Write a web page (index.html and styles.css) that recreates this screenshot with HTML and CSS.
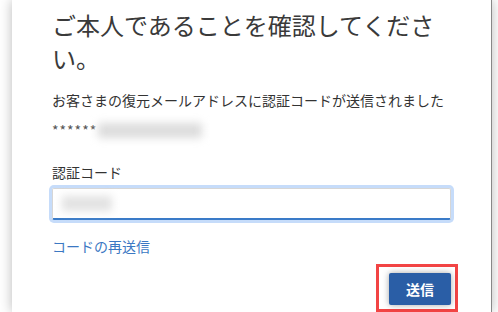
FILE: index.html
```html
<!DOCTYPE html>
<html lang="ja">
<head>
    <meta charset="UTF-8">
    <meta name="viewport" content="width=device-width, initial-scale=1.0">
    <title>本人確認</title>
    <link rel="stylesheet" href="styles.css">
</head>
<body>

    <div class="card">
        <h1>ご本人であることを確認してください。</h1>

        <p class="note">お客さまの復元メールアドレスに認証コードが送信されました</p>

        <!-- masked address -->
        <p class="email">******<span class="blur blur-email"></span></p>

        <label class="label" for="code">認証コード</label>
        <div class="field">
            <span class="blur blur-code"></span>
            <input type="text" id="code">
        </div>

        <a class="resend" href="#">コードの再送信</a>

        <div class="actions">
            <span class="highlight">
                <button class="submit">送信</button>
            </span>
        </div>
    </div>

</body>
</html>
```

FILE: styles.css
```css
body {
    font-family: "Noto Sans CJK JP", "Noto Sans", sans-serif;
    background-color: #fff;
    color: #333;
    margin: 0;
    overflow: hidden;
}

.card {
    margin-left: 12px;
    width: 480px;
    height: 312px;
    box-sizing: border-box;
    padding: 8px 40px 0 40px;
    background-color: #fff;
    box-shadow: 0 0 12px rgba(0, 0, 0, 0.28);
    border-right: 1px solid #888;
}

h1 {
    font-size: 24px;
    font-weight: 400;
    line-height: 33px;
    margin: 0;
    color: #3a3a3a;
}

.note {
    font-size: 14px;
    line-height: 20px;
    margin: 16px 0 0;
}

.email {
    font-size: 14px;
    line-height: 20px;
    margin: 10px 0 0;
    color: #555;
    letter-spacing: 1px;
    display: flex;
    align-items: center;
}

.blur {
    display: inline-block;
    background-color: #dcdcdc;
    filter: blur(4px);
}

.blur-email {
    width: 104px;
    height: 15px;
    margin-left: 1px;
}

.label {
    display: block;
    font-size: 14px;
    line-height: 20px;
    margin-top: 22px;
}

/* Code input with focus ring */
.field {
    position: relative;
    margin-top: 6px;
}

.field input {
    display: block;
    width: 100%;
    height: 32px;
    box-sizing: border-box;
    border: 1px solid #d6d6d6;
    border-bottom: 2px solid #3a7bc8;
    border-radius: 2px;
    box-shadow: 0 0 0 3px #c6dcfa;
    outline: none;
    background: transparent;
}

.blur-code {
    position: absolute;
    left: 10px;
    top: 8px;
    width: 50px;
    height: 15px;
    background-color: #e2e2e2;
}

.resend {
    display: block;
    font-size: 14px;
    line-height: 20px;
    color: #3b78c3;
    text-decoration: none;
    margin-top: 16px;
}

.actions {
    display: flex;
    justify-content: flex-end;
    margin-top: 8px;
    margin-right: -7px;
}

.highlight {
    display: inline-block;
    border: 3px solid #f24444;
    padding: 6px 4px 4px 10px;
}

.submit {
    display: block;
    width: 62px;
    height: 32px;
    background-color: #2a5ea6;
    color: #fff;
    font-family: inherit;
    font-size: 14px;
    font-weight: 700;
    border: none;
    border-radius: 2px;
    box-shadow: 0 0 6px rgba(0, 0, 0, 0.35);
}
```
